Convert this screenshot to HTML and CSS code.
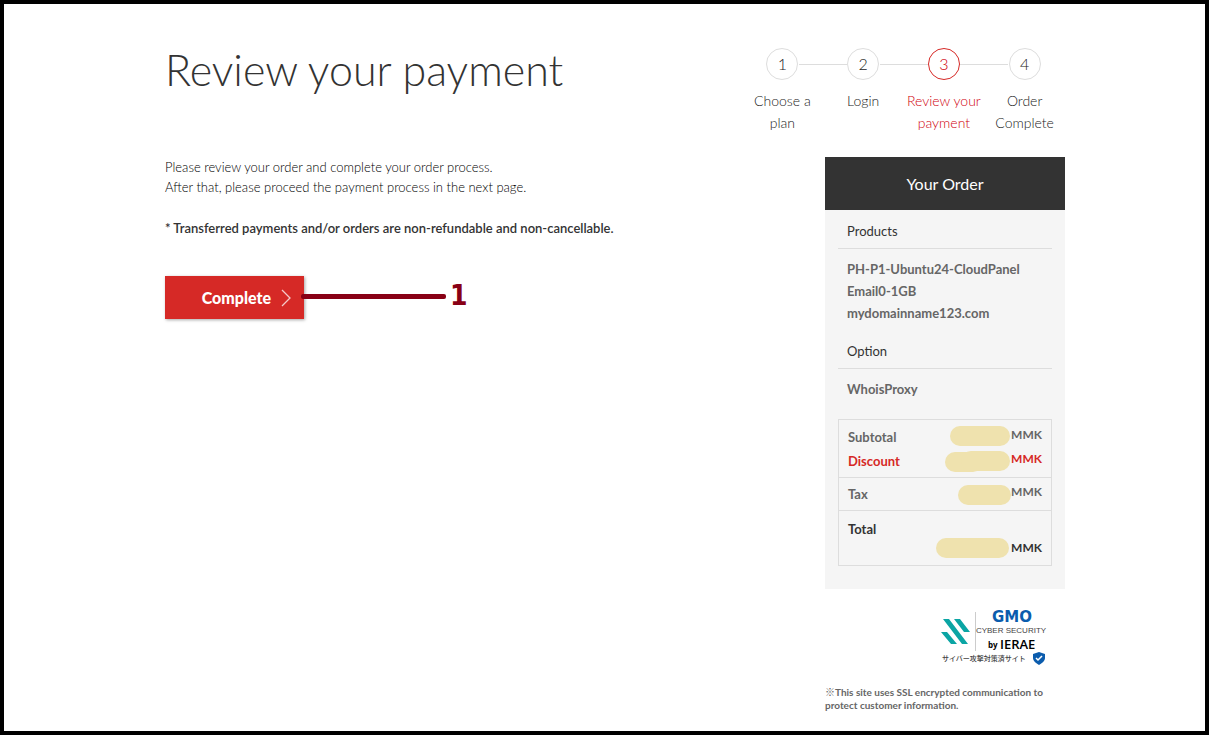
FILE: index.html
```html
<!DOCTYPE html>
<html lang="en">
<head>
	<meta charset="utf-8">
	<title>Review your payment</title>
	<link rel="stylesheet" href="styles.css">
</head>
<body>
<div class="page">
	<header class="header">
		<h1>Review your payment</h1>
		<ol class="steps">
			<li><span class="num">1</span>Choose a plan</li>
			<li><span class="num">2</span>Login</li>
			<li class="on"><span class="num">3</span>Review your payment</li>
			<li><span class="num">4</span>Order Complete</li>
		</ol>
	</header>
	<div class="content">
		<main class="main">
			<p>Please review your order and complete your order process.<br>After that, please proceed the payment process in the next page.</p>
			<p class="notice">* Transferred payments and/or orders are non-refundable and non-cancellable.</p>
			<div class="action">
				<button type="submit" class="btn">Complete
					<svg width="10" height="18" viewBox="0 0 10 18"><path d="M1 1l8 8-8 8" fill="none" stroke="#fff" stroke-opacity=".75" stroke-width="1.3"/></svg>
				</button>
				<div class="callout"><span class="callout-line"></span>1</div>
			</div>
		</main>
		<aside class="side">
			<section class="order">
				<h2>Your Order</h2>
				<div class="order-body">
					<h3>Products</h3>
					<ul class="items">
						<li>PH-P1-Ubuntu24-CloudPanel</li>
						<li>Email0-1GB</li>
						<li>mydomainname123.com</li>
					</ul>
					<h3>Option</h3>
					<ul class="items">
						<li>WhoisProxy</li>
					</ul>
					<table class="price">
						<tbody>
							<tr class="subtotal"><th scope="row">Subtotal</th><td><span class="mask mask-subtotal"></span>MMK</td></tr>
							<tr class="discount"><th scope="row">Discount</th><td><svg class="mask-discount" width="65" height="21" viewBox="0 0 65 21" fill="#efe2ae"><rect y="1" width="38" height="20" rx="10"/><rect x="16" width="49" height="20" rx="10"/></svg>MMK</td></tr>
						</tbody>
						<tbody>
							<tr class="tax"><th scope="row">Tax</th><td><span class="mask mask-tax"></span>MMK</td></tr>
						</tbody>
						<tbody>
							<tr class="total"><th scope="row">Total</th><td><span class="mask mask-total"></span>MMK</td></tr>
						</tbody>
					</table>
				</div>
			</section>
			<div class="seal">
				<svg width="112" height="66" viewBox="0 -8 112 66">
					<path d="M3 9h6l19 25h-6zM14 9h6l10 13h-6zM1 22h6l10 12h-6z" fill="#0ba5a4"/>
					<path d="M35.500 2v39" stroke="#ccc"/>
					<text class="seal-gmo" x="72" y="12" text-anchor="middle">GMO</text>
					<text class="seal-cyber" x="71" y="23" text-anchor="middle">CYBER SECURITY</text>
					<text class="seal-by" x="48" y="38">by</text>
					<text class="seal-ierae" x="60" y="39">IERAE</text>
					<text class="seal-jp" x="2" y="51">サイバー攻撃対策済サイト</text>
					<path d="M99 42l6 2v4c0 3-3 5-6 7-3-2-6-4-6-7v-4z" fill="#0b5cad"/>
					<path d="M96 48l2 2 4-4" fill="none" stroke="#fff" stroke-width="1.500"/>
				</svg>
			</div>
			<p class="ssl">※This site uses SSL encrypted communication to protect customer information.</p>
		</aside>
	</div>
</div>
</body>
</html>
```
FILE: styles.css
```css
*{
	box-sizing: border-box;
	margin: 0;
	padding: 0;
}
body{
	min-height: 100vh;
	border: 4px solid #000;
	padding-left: 21px;
	background-color: #fff;
	color: #333;
	font-family: "Century Gothic", Lato, "Noto Sans CJK JP", sans-serif;
	font-size: 13px;
}
ul,ol{
	list-style: none;
}
.page{
	max-width: 900px;
	margin: 0 auto;
	padding-top: 42px;
}
.header{
	display: flex;
	justify-content: space-between;
	height: 111px;
}
h1{
	font-size: 43px;
	line-height: 48px;
	font-weight: 300;
}
.steps{
	display: flex;
	width: 323px;
	padding-top: 2px;
	text-align: center;
	line-height: 22px;
	font-size: 14px;
	font-weight: 300;
	color: #222;
}
.steps li{
	position: relative;
	flex: 1;
}
.steps li + li::before{
	content: "";
	position: absolute;
	top: 16px;
	left: -24px;
	width: 48px;
	border-top: 1px solid #ddd;
}
.num{
	display: block;
	width: 32px;
	height: 32px;
	margin: 0 auto 10px;
	border: 1px solid #ddd;
	border-radius: 50%;
	line-height: 30px;
	font-size: 16px;
}
.steps .on{
	color: #d0000c;
}
.on .num{
	border-color: #d62926;
}
.content{
	display: flex;
	justify-content: space-between;
}
.main{
	line-height: 20px;
	font-weight: 300;
	color: #000;
}
.notice{
	margin-top: 21px;
	font-weight: 600;
	color: #333;
}
.action{
	display: flex;
	position: relative;
	margin-top: 38px;
}
.btn{
	display: flex;
	align-items: center;
	justify-content: flex-end;
	gap: 10px;
	width: 139px;
	height: 43px;
	padding-right: 13px;
	border: 0;
	background-color: #d62926;
	box-shadow: 1px 1px 3px rgba(0,0,0,.35);
	color: #fff;
	font-family: inherit;
	font-size: 16px;
	font-weight: 900;
	cursor: pointer;
}
/* pointer from the button to its number */
.callout{
	position: absolute;
	top: 0;
	left: 136px;
	display: flex;
	align-items: center;
	gap: 4px;
	height: 40px;
	color: #880015;
	font-family: "DejaVu Sans Condensed", "DejaVu Sans", sans-serif;
	font-size: 28px;
	font-weight: bold;
}
.callout-line{
	width: 145px;
	height: 5px;
	border-radius: 2px;
	background-color: #880015;
}
.side{
	width: 240px;
}
.order{
	background-color: #f5f5f5;
}
h2{
	background-color: #333;
	color: #fff;
	text-align: center;
	font-size: 16px;
	line-height: 53px;
	font-weight: normal;
}
.order-body{
	padding: 5px 13px 23px;
}
h3{
	padding: 6px 9px;
	border-bottom: 1px solid #ddd;
	font-size: 13px;
	line-height: 21px;
	font-weight: normal;
}
.items{
	padding: 9px 9px 11px;
	line-height: 22px;
	font-weight: bold;
	color: #666;
}
.items + .price{
	margin-top: 8px;
}
.price{
	width: 100%;
	border-collapse: collapse;
	border: 1px solid #ddd;
	color: #666;
	line-height: 20px;
	font-weight: bold;
}
.price tbody{
	border-bottom: 1px solid #ddd;
}
.price th{
	padding-left: 9px;
	text-align: left;
	vertical-align: top;
}
.price td{
	display: flex;
	justify-content: flex-end;
	gap: 1px;
	padding-right: 9px;
	font-size: 12px;
}
.mask{
	height: 20px;
	border-radius: 10px;
	background-color: #efe2ae;
}
.mask-subtotal{
	width: 60px;
}
.mask-tax{
	width: 53px;
}
.mask-total{
	width: 73px;
}
.subtotal th{
	padding-top: 7px;
}
.subtotal td{
	padding-top: 6px;
	line-height: 18px;
}
.discount{
	color: #d62926;
}
.discount th{
	padding-top: 4px;
}
.discount td{
	padding: 4px 9px 5px 0;
	line-height: 16px;
}
.tax th{
	padding-top: 6px;
}
.price .tax td{
	gap: 0;
	padding: 7px 9px 5px 0;
	line-height: 14px;
}
.total{
	color: #333;
}
.total th{
	padding-top: 8px;
}
.price .total td{
	gap: 2px;
	padding: 27px 9px 7px 0;
}
.seal{
	display: flex;
	justify-content: flex-end;
	margin: 13px 13px 18px 0;
}
.seal-gmo{
	fill: #0b5cad;
	font: bold 15px "DejaVu Sans", sans-serif;
}
.seal-cyber{
	fill: #444;
	font: 8px "Liberation Sans", sans-serif;
}
.seal-by{
	font: bold 8px "Open Sans", sans-serif;
}
.seal-ierae{
	font: 600 13px "Open Sans", sans-serif;
}
.seal-jp{
	fill: #444;
	font: 500 7px "Noto Sans CJK JP", sans-serif;
}
.ssl{
	color: #666;
	font-size: 10px;
	line-height: 13px;
	font-weight: bold;
}
```
